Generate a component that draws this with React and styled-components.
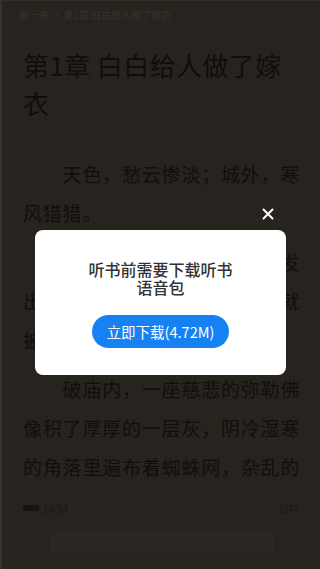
import React from 'react'
import styled, { createGlobalStyle } from 'styled-components'

const GlobalStyle = createGlobalStyle`
  html, body {
    margin: 0;
    padding: 0;
    background: #27231e;
  }
  * {
    box-sizing: border-box;
  }
`

const Page = styled.div`
  position: relative;
  width: 320px;
  height: 569px;
  overflow: hidden;
  background: #27231e;
  border-left: 2px solid #37332d;
  border-top: 1px solid #34302a;
  font-family: "Noto Sans CJK SC", "Noto Sans", sans-serif;
`

const Reader = styled.div`
  padding: 7px 19px 0 21px;
`

const RunningHead = styled.div`
  font-size: 10px;
  line-height: 14px;
  color: #38332c;
  margin-left: -4px;
`

const ChapterTitle = styled.h1`
  margin: 24px 0 0;
  font-size: 26px;
  line-height: 38px;
  font-weight: 400;
  color: #100e0b;
  letter-spacing: 0.4px;
`

const Body = styled.div`
  margin-top: 32px;
`

const Para = styled.p`
  margin: 0 0 10px;
  width: 279px;
  font-size: 19px;
  line-height: 39px;
  letter-spacing: 0.8px;
  text-indent: 39.6px;
  color: #110f0c;
`

const StatusBar = styled.div`
  display: flex;
  align-items: center;
  justify-content: space-between;
  margin-top: 14px;
  padding-right: 2px;
  font-size: 10px;
  color: #1a1814;
  height: 16px;
`

const Clock = styled.div`
  display: flex;
  align-items: center;
  gap: 4px;
`

const Battery = styled.span`
  display: inline-block;
  width: 16px;
  height: 6px;
  background: #17150f;
  border-radius: 1px;
`

const AdStrip = styled.div`
  margin: 14px auto 0;
  width: 224px;
  height: 22px;
  background: #2a2621;
`

const Dialog = styled.div`
  position: absolute;
  top: 229px;
  left: 33px;
  width: 251px;
  height: 145px;
  background: #ffffff;
  border-radius: 8px;
  display: flex;
  flex-direction: column;
  align-items: center;
  padding-top: 30px;
`

const DialogText = styled.div`
  font-size: 16px;
  line-height: 18px;
  font-weight: 500;
  color: #333333;
  text-align: center;
  width: 150px;
`

const DownloadButton = styled.button`
  margin-top: 19px;
  width: 137px;
  height: 33px;
  border: none;
  border-radius: 17px;
  background: #1681f2;
  color: #ffffff;
  font-family: "Noto Sans CJK SC", "Noto Sans", sans-serif;
  font-size: 14.5px;
  padding: 0;
  cursor: pointer;
`

const CloseButton = styled.div`
  position: absolute;
  top: 206px;
  left: 259px;
  width: 14px;
  height: 14px;
  display: flex;
  align-items: center;
  justify-content: center;
`

const App = () => {
  return (
    <Page>
      <GlobalStyle />
      <Reader>
        <RunningHead>第一卷 · 第1章 白白给人做了嫁衣</RunningHead>
        <ChapterTitle>第1章 白白给人做了嫁衣</ChapterTitle>
        <Body>
          <Para>天色，愁云惨淡；城外，寒风猎猎。</Para>
          <Para>街上行人寥寥，偶有野狗发出几声呜咽，便又缩回墙角，就披着一身寒霜蜷缩成了团。</Para>
          <Para>破庙内，一座慈悲的弥勒佛像积了厚厚的一层灰，阴冷湿寒的角落里遍布着蜘蛛网，杂乱的</Para>
        </Body>
        <StatusBar>
          <Clock>
            <Battery />
            <span>14:54</span>
          </Clock>
          <span>1/47</span>
        </StatusBar>
        <AdStrip />
      </Reader>

      <CloseButton>
        <svg width="12" height="12" viewBox="0 0 12 12">
          <path d="M1.5 1.5 L10.5 10.5 M10.5 1.5 L1.5 10.5" stroke="#ffffff" strokeWidth="2" strokeLinecap="round" />
        </svg>
      </CloseButton>

      <Dialog>
        <DialogText>听书前需要下载听书语音包</DialogText>
        <DownloadButton>立即下载(4.72M)</DownloadButton>
      </Dialog>
    </Page>
  )
}

export default App
